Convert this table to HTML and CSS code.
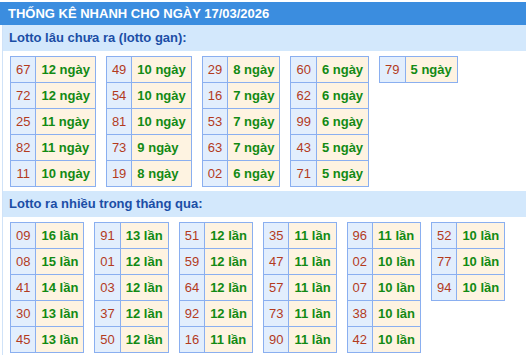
FILE: index.html
```html
<!DOCTYPE html>
<html>
<head>
<meta charset="utf-8">
<link rel="stylesheet" href="styles.css">
</head>
<body>
<div class="wrap">
  <div class="title">THỐNG KÊ NHANH CHO NGÀY 17/03/2026</div>
  <div class="panel">
    <div class="sub">Lotto lâu chưa ra (lotto gan):</div>
    <div class="tables">
      <table class="t"><tr><td class="n">67</td><td class="c">12 ngày</td></tr><tr><td class="n">72</td><td class="c">12 ngày</td></tr><tr><td class="n">25</td><td class="c">11 ngày</td></tr><tr><td class="n">82</td><td class="c">11 ngày</td></tr><tr><td class="n">11</td><td class="c">10 ngày</td></tr></table>
      <table class="t"><tr><td class="n">49</td><td class="c">10 ngày</td></tr><tr><td class="n">54</td><td class="c">10 ngày</td></tr><tr><td class="n">81</td><td class="c">10 ngày</td></tr><tr><td class="n">73</td><td class="c">9 ngày</td></tr><tr><td class="n">19</td><td class="c">8 ngày</td></tr></table>
      <table class="t"><tr><td class="n">29</td><td class="c">8 ngày</td></tr><tr><td class="n">16</td><td class="c">7 ngày</td></tr><tr><td class="n">53</td><td class="c">7 ngày</td></tr><tr><td class="n">63</td><td class="c">7 ngày</td></tr><tr><td class="n">02</td><td class="c">6 ngày</td></tr></table>
      <table class="t"><tr><td class="n">60</td><td class="c">6 ngày</td></tr><tr><td class="n">62</td><td class="c">6 ngày</td></tr><tr><td class="n">99</td><td class="c">6 ngày</td></tr><tr><td class="n">43</td><td class="c">5 ngày</td></tr><tr><td class="n">71</td><td class="c">5 ngày</td></tr></table>
      <table class="t"><tr><td class="n">79</td><td class="c">5 ngày</td></tr></table>
    </div>
    <div class="sub">Lotto ra nhiều trong tháng qua:</div>
    <div class="tables">
      <table class="t"><tr><td class="n">09</td><td class="c">16 lần</td></tr><tr><td class="n">08</td><td class="c">15 lần</td></tr><tr><td class="n">41</td><td class="c">14 lần</td></tr><tr><td class="n">30</td><td class="c">13 lần</td></tr><tr><td class="n">45</td><td class="c">13 lần</td></tr></table>
      <table class="t"><tr><td class="n">91</td><td class="c">13 lần</td></tr><tr><td class="n">01</td><td class="c">12 lần</td></tr><tr><td class="n">03</td><td class="c">12 lần</td></tr><tr><td class="n">37</td><td class="c">12 lần</td></tr><tr><td class="n">50</td><td class="c">12 lần</td></tr></table>
      <table class="t"><tr><td class="n">51</td><td class="c">12 lần</td></tr><tr><td class="n">59</td><td class="c">12 lần</td></tr><tr><td class="n">64</td><td class="c">12 lần</td></tr><tr><td class="n">92</td><td class="c">12 lần</td></tr><tr><td class="n">16</td><td class="c">11 lần</td></tr></table>
      <table class="t"><tr><td class="n">35</td><td class="c">11 lần</td></tr><tr><td class="n">47</td><td class="c">11 lần</td></tr><tr><td class="n">57</td><td class="c">11 lần</td></tr><tr><td class="n">73</td><td class="c">11 lần</td></tr><tr><td class="n">90</td><td class="c">11 lần</td></tr></table>
      <table class="t"><tr><td class="n">96</td><td class="c">11 lần</td></tr><tr><td class="n">02</td><td class="c">10 lần</td></tr><tr><td class="n">07</td><td class="c">10 lần</td></tr><tr><td class="n">38</td><td class="c">10 lần</td></tr><tr><td class="n">42</td><td class="c">10 lần</td></tr></table>
      <table class="t"><tr><td class="n">52</td><td class="c">10 lần</td></tr><tr><td class="n">77</td><td class="c">10 lần</td></tr><tr><td class="n">94</td><td class="c">10 lần</td></tr></table>
    </div>
  </div>
</div>
</body>
</html>
```
FILE: styles.css
```css
html, body {
  margin: 0;
  padding: 0;
  background: #fff;
}
body {
  font-family: "Liberation Sans", Arial, sans-serif;
  font-size: 13px;
}
.wrap {
  padding-top: 2px;
}
.title {
  height: 23px;
  line-height: 23px;
  background: #3b8ddf;
  color: #fff;
  font-weight: bold;
  font-size: 13px;
  padding-left: 8px;
  white-space: nowrap;
}
.panel {
  margin-left: 2px;
  border-left: 1px solid #cfe2f8;
}
.sub {
  height: 26px;
  line-height: 26px;
  background: #d3e8fc;
  color: #1b4ea6;
  font-weight: bold;
  padding-left: 6px;
}
.tables {
  display: flex;
  align-items: flex-start;
  gap: 10px;
  padding: 5px 0 4px 7px;
}
.t {
  border-collapse: collapse;
}
.t td {
  border: 1px solid #8aaff0;
  height: 26px;
  padding: 0 5px;
  box-sizing: border-box;
  white-space: nowrap;
}
.t .n {
  background: #e2eefd;
  color: #b33b1e;
  text-align: center;
}
.t .c {
  background: #fef3e1;
  color: #128a14;
  font-weight: bold;
}
```
